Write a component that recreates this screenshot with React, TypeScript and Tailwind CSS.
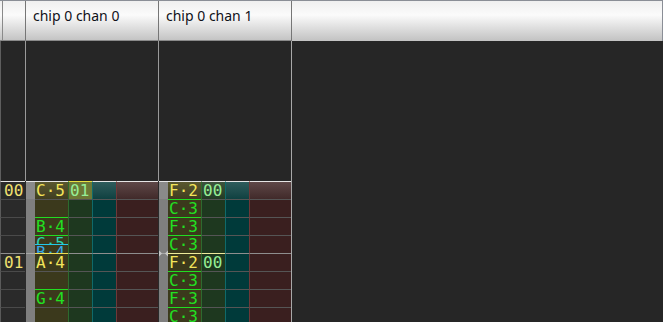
import React from "react";

const N = "border-t-[#555555]";
const ROWTOP = ["border-t-[#e6e6e6]", N, N, N, "border-t-[#8e8e8e]", N, N, N];
const NUMTOP = [
  "border-t-[#e6e6e6]",
  "border-t-[#4a4a4a]",
  "border-t-[#4a4a4a]",
  "border-t-[#4a4a4a]",
  "border-t-[#8e8e8e]",
  "border-t-[#4a4a4a]",
  "border-t-[#4a4a4a]",
  "border-t-[#4a4a4a]",
];
const BARTOP = [
  "border-t-[#e6e6e6]",
  "border-t-[#7f7f7f]",
  "border-t-[#7f7f7f]",
  "border-t-[#7f7f7f]",
  "border-t-[#a6a6a6]",
  "border-t-[#7f7f7f]",
  "border-t-[#7f7f7f]",
  "border-t-[#7f7f7f]",
];

const OLIVE = "bg-[#3b391c]";
const OLIVE0 = "bg-linear-to-b from-[#59572f] to-[#403e21]";
const GREEN = "text-[#22e022]";
const YELLOW = "text-[#f2e45a]";
const GTOP = "border-t-[#22dd22]";

type NoteCell = { text?: string; color?: string; top: string; bg: string; mini?: boolean };
type InsCell = { text?: string; top: string; bg: string };

const INSBG = "bg-[#1e381f]";
const VOLBG = "bg-[#003a3a]";
const EFFBG = "bg-[#3a1f1f]";
const VOL0 = "bg-linear-to-b from-[#2f5c5c] to-[#0f4141]";
const EFF0 = "bg-linear-to-b from-[#5e4848] to-[#412a2a]";

const ch0Notes: NoteCell[] = [
  { text: "C·5", color: YELLOW, top: ROWTOP[0], bg: OLIVE0 },
  { top: N, bg: OLIVE },
  { text: "B·4", color: GREEN, top: GTOP, bg: OLIVE },
  { mini: true, top: GTOP, bg: OLIVE },
  { text: "A·4", color: YELLOW, top: "border-t-[#eadc52]", bg: OLIVE },
  { top: N, bg: OLIVE },
  { text: "G·4", color: GREEN, top: GTOP, bg: OLIVE },
  { top: N, bg: OLIVE },
];
const ch0Ins: InsCell[] = [
  { text: "01", top: "border-t-[#e8e040]", bg: "bg-[#6c7836]" },
  { top: N, bg: INSBG },
  { top: N, bg: INSBG },
  { top: N, bg: INSBG },
  { top: ROWTOP[4], bg: INSBG },
  { top: N, bg: INSBG },
  { top: N, bg: INSBG },
  { top: N, bg: INSBG },
];

const ch1Notes: NoteCell[] = [
  { text: "F·2", color: YELLOW, top: ROWTOP[0], bg: OLIVE0 },
  { text: "C·3", color: GREEN, top: GTOP, bg: OLIVE },
  { text: "F·3", color: GREEN, top: GTOP, bg: OLIVE },
  { text: "C·3", color: GREEN, top: GTOP, bg: OLIVE },
  { text: "F·2", color: YELLOW, top: "border-t-[#eeea9a]", bg: OLIVE },
  { text: "C·3", color: GREEN, top: GTOP, bg: OLIVE },
  { text: "F·3", color: GREEN, top: GTOP, bg: OLIVE },
  { text: "C·3", color: GREEN, top: GTOP, bg: OLIVE },
];
const ch1Ins: InsCell[] = [
  { text: "00", top: ROWTOP[0], bg: "bg-linear-to-b from-[#3d543d] to-[#233b24]" },
  { top: N, bg: INSBG },
  { top: N, bg: INSBG },
  { top: N, bg: INSBG },
  { text: "00", top: "border-t-[#eeea9a]", bg: INSBG },
  { top: N, bg: INSBG },
  { top: N, bg: INSBG },
  { top: N, bg: INSBG },
];

function NoteView({ n }: { n: NoteCell }) {
  if (n.mini) {
    return (
      <div className={`w-[33px] h-[18px] border-t ${n.top} ${n.bg} flex flex-col overflow-hidden`}>
        <div className="h-[8px] shrink-0 overflow-hidden pl-[1px] leading-[16px] text-[#2ad0b0]">C·5</div>
        <div className="h-[9px] shrink-0 overflow-hidden border-t border-t-[#22c8e8] pl-[1px] leading-[16px] text-[#38a8e8]">
          B·4
        </div>
      </div>
    );
  }
  return (
    <div className={`w-[33px] h-[18px] border-t ${n.top} ${n.bg} pl-[1px] ${n.color ?? ""}`}>{n.text ?? ""}</div>
  );
}

function ChanRow({ i, note, ins }: { i: number; note: NoteCell; ins: InsCell }) {
  return (
    <div className="flex w-[133px] h-[18px] border-l border-l-[#2a2a2a]">
      <div className={`w-[9px] border-t ${BARTOP[i]} ${i === 0 ? "bg-[#8a8a8a]" : "bg-[#7f7f7f]"}`} />
      <NoteView n={note} />
      <div className={`w-[24px] border-l border-l-[#2e6a2e] border-t ${ins.top} ${ins.bg} pl-[1px] text-[#96ee96]`}>
        {ins.text ?? ""}
      </div>
      <div className={`w-[24px] border-l border-l-[#0f6a6a] border-t ${ROWTOP[i]} ${i === 0 ? VOL0 : VOLBG}`} />
      <div className={`w-[42px] border-l border-l-[#6e3838] border-t ${ROWTOP[i]} ${i === 0 ? EFF0 : EFFBG}`} />
    </div>
  );
}

export default function App() {
  const rows = [0, 1, 2, 3, 4, 5, 6, 7];
  return (
    <div className="relative w-[663px] h-[322px] overflow-hidden bg-[#262626] flex flex-col">
      {/* header */}
      <div className="h-[41px] shrink-0 flex border-t border-t-[#8a8e96] bg-linear-to-b from-[#efefef] via-[#fbfbfb] via-35% to-[#c2c2c2] font-['Noto_Sans',sans-serif] text-[14px] leading-[19px] text-[#101018]">
        <div className="w-[25px] pl-[2px] border-b border-b-[#8a8a8a]">
          <div className="h-full border-l border-l-[#8a8a8a]" />
        </div>
        <div className="w-[133px] border-l border-l-[#767676] border-b border-b-[#8a8a8a] pl-[7px] pt-[5px]">
          chip 0 chan 0
        </div>
        <div className="w-[133px] border-l border-l-[#767676] border-b border-b-[#8a8a8a] pl-[7px] pt-[5px]">
          chip 0 chan 1
        </div>
        <div className="flex-1 border-l border-l-[#767676] border-r border-r-[#8a8e96]" />
      </div>

      {/* body */}
      <div className="flex-1 min-h-0 overflow-hidden flex font-['DejaVu_Sans_Mono',monospace] text-[16px] leading-[17px]">
        <div className="w-[291px] shrink-0 flex flex-col">
          <div className="h-[140px] shrink-0 flex">
            <div className="w-[25px] border-l border-l-[#5e5e5e]" />
            <div className="w-[133px] border-l border-l-[#9a9a9a]" />
            <div className="w-[133px] border-l border-l-[#9a9a9a]" />
          </div>
          {rows.map((i) => (
            <div key={i} className="flex h-[18px] shrink-0">
              <div
                className={`w-[25px] border-l border-l-[#5a5a5a] border-t ${NUMTOP[i]} bg-[#2a2a2a] pl-[3px] text-[#f0e070]`}
              >
                {i === 0 ? "00" : i === 4 ? "01" : ""}
              </div>
              <ChanRow i={i} note={ch0Notes[i]} ins={ch0Ins[i]} />
              <ChanRow i={i} note={ch1Notes[i]} ins={ch1Ins[i]} />
            </div>
          ))}
        </div>
        <div className="flex-1 border-l border-l-[#a8a8a8]" />
      </div>

      {/* row markers */}
      <svg className="absolute left-[159px] top-[250px]" width="9" height="7" viewBox="0 0 9 7">
        <polygon points="0,0.5 3,3.5 0,6.5" fill="#c8c8c8" />
        <polygon points="9,0.5 6,3.5 9,6.5" fill="#c8c8c8" />
      </svg>
    </div>
  );
}
